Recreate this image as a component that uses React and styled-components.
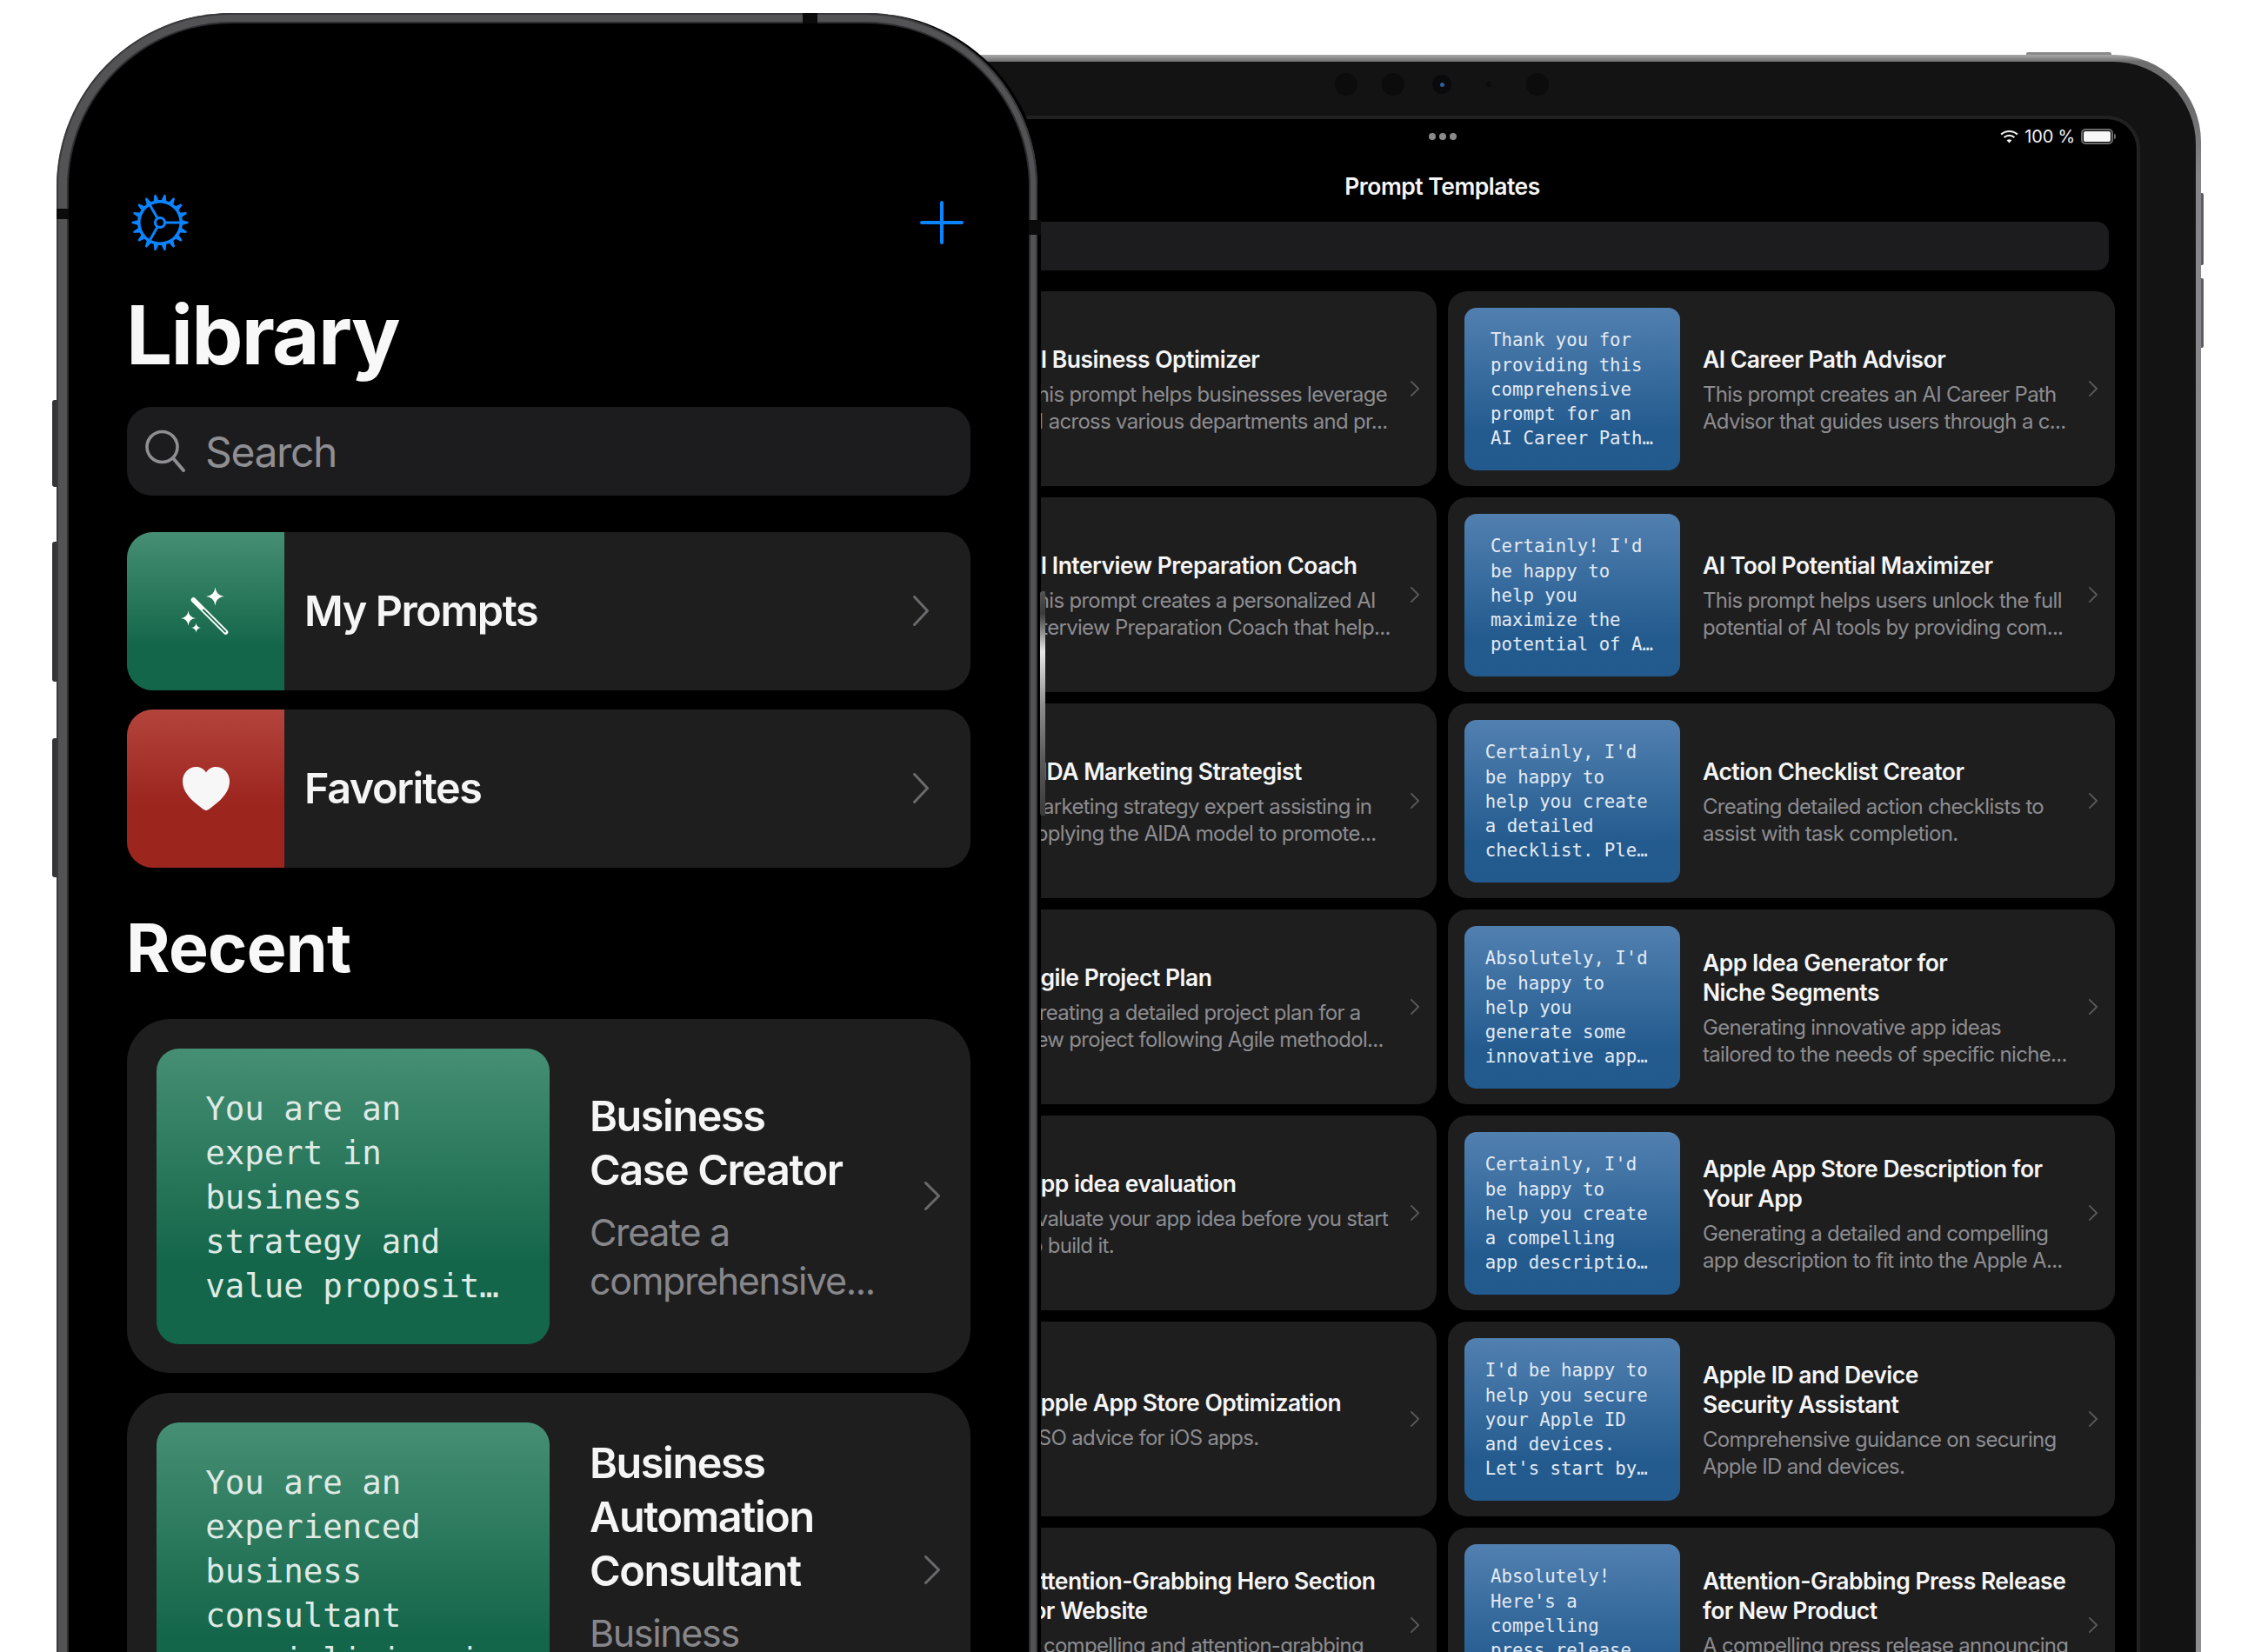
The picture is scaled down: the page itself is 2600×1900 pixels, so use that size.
import React from "react";
import styled, { createGlobalStyle } from "styled-components";

const Global = createGlobalStyle`
  html, body { margin: 0; padding: 0; background: #fff; }
  body { font-family: "Inter", "Liberation Sans", sans-serif; -webkit-font-smoothing: antialiased; }
`;

const Stage = styled.div`
  position: relative;
  width: 2600px;
  height: 1900px;
  overflow: hidden;
  background: #fff;
`;

/* ---------- iPad ---------- */
const IPad = styled.div`
  position: absolute;
  left: 786px;
  top: 63px;
  width: 1745px;
  height: 2100px;
  box-sizing: border-box;
  padding: 8px 6px 0 5px;
  border-radius: 100px;
  background: linear-gradient(180deg, #a8a8a8 0, #6e6e6e 8px, #6c6c6e 60px, #868688 140px, #909092 100%);
`;
const TopButton = styled.div`
  position: absolute;
  left: 1544px;
  top: -3px;
  width: 98px;
  height: 3px;
  border-radius: 2px 2px 0 0;
  background: #8a8a8c;
`;
const SideButton = styled.div`
  position: absolute;
  right: -3px;
  top: ${(p) => p.$top}px;
  width: 3px;
  height: ${(p) => p.$height}px;
  border-radius: 0 2px 2px 0;
  background: #5c5c5e;
`;
const Bezel = styled.div`
  height: 100%;
  box-sizing: border-box;
  padding: 62px 64px 0 65px;
  border-radius: 95px 95px 0 0;
  background: #131313;
  position: relative;
`;
const Lens = styled.div`
  position: absolute;
  top: ${(p) => 26 - p.$r}px;
  left: ${(p) => p.$x - 791 - p.$r}px;
  width: ${(p) => p.$r * 2}px;
  height: ${(p) => p.$r * 2}px;
  border-radius: 50%;
  background: ${(p) => p.$c || "#0c0c0c"};
  display: flex;
  align-items: center;
  justify-content: center;
`;
const LensDot = styled.div`
  width: 5px;
  height: 5px;
  border-radius: 50%;
  background: #2f5f9c;
`;
const Screen = styled.div`
  height: 100%;
  box-sizing: border-box;
  border: 4px solid #212121;
  border-bottom: 0;
  border-radius: 38px 38px 0 0;
  background: #000;
  display: flex;
  flex-direction: column;
`;
const StatusBar = styled.div`
  height: 40px;
  display: grid;
  grid-template-columns: 1fr auto 1fr;
  align-items: center;
  padding: 0 24px;
`;
const Dots = styled.div`
  display: flex;
  gap: 4px;
`;
const Dot = styled.span`
  width: 8px;
  height: 8px;
  border-radius: 50%;
  background: #8a8a8a;
`;
const StatusRight = styled.div`
  justify-self: end;
  display: flex;
  align-items: center;
  gap: 7px;
  color: #f2f2f2;
  font-size: 20px;
  line-height: 24px;
  letter-spacing: -0.2px;
`;
const Battery = styled.div`
  position: relative;
  width: 37px;
  height: 18px;
  box-sizing: border-box;
  border: 2px solid #6b6b6b;
  border-radius: 5px;
  padding: 1px;
  margin-right: 3px;
  &::before {
    content: "";
    display: block;
    height: 100%;
    background: #f7f7f7;
    border-radius: 2px;
  }
  &::after {
    content: "";
    position: absolute;
    right: -5px;
    top: 4px;
    width: 2px;
    height: 6px;
    border-radius: 0 2px 2px 0;
    background: #6b6b6b;
  }
`;
const NavTitle = styled.div`
  height: 76px;
  line-height: 74px;
  text-align: center;
  color: #f5f5f5;
  font-size: 26.5px;
  font-weight: 600;
  letter-spacing: -0.5px;
`;
const PadSearch = styled.div`
  height: 56px;
  margin: 2px 32px 0;
  border-radius: 14px;
  background: #1c1c1e;
`;
const PadGrid = styled.div`
  margin-top: 24px;
  padding: 0 25px;
  display: grid;
  grid-template-columns: 767px 767px;
  grid-auto-rows: 224px;
  gap: 13px;
`;
const PadCard = styled.div`
  display: flex;
  align-items: center;
  box-sizing: border-box;
  padding: 19px 20px 19px 19px;
  border-radius: 22px;
  background: #1e1e1f;
`;
const PadThumb = styled.div`
  flex: none;
  width: 248px;
  height: 187px;
  padding-top: 2px;
  box-sizing: border-box;
  border-radius: 14px;
  background: linear-gradient(180deg, #5180b0 0%, #245b8f 75%, #235a8e 100%);
  display: flex;
  align-items: center;
  justify-content: center;
`;
const PadThumbText = styled.div`
  font-family: "DejaVu Sans Mono", "Liberation Mono", monospace;
  font-size: 20.7px;
  line-height: 28.2px;
  color: #e2eaf3;
  white-space: pre;
  margin-left: -1px;
`;
const PadText = styled.div`
  flex: 1;
  min-width: 0;
  margin-left: 26px;
  padding-top: 1px;
`;
const PadTitle = styled.div`
  font-size: 26.5px;
  line-height: 34px;
  font-weight: 600;
  letter-spacing: -0.5px;
  color: #f5f5f5;
  white-space: pre-line;
`;
const PadDesc = styled.div`
  margin-top: 8px;
  font-size: 24px;
  line-height: 31px;
  letter-spacing: -0.7px;
  color: #8c8c8f;
  white-space: pre-line;
`;

/* ---------- iPhone ---------- */
const Phone = styled.div`
  position: absolute;
  left: 65px;
  top: 15px;
  width: 1128px;
  height: 2200px;
  box-sizing: border-box;
  padding: 12px 10px 0 14px;
  border-radius: 200px;
  background: #535355;
  box-shadow: 4px 0 0 #000, inset 0 0 0 2px #3a3a3c;
`;
const PhoneKey = styled.div`
  position: absolute;
  left: -5px;
  top: ${(p) => p.$top}px;
  width: 5px;
  height: ${(p) => p.$height}px;
  border-radius: 3px 0 0 3px;
  background: #353537;
`;
const Glint = styled.div`
  position: absolute;
  left: 1131px;
  top: 665px;
  width: 6px;
  height: 258px;
  border-radius: 3px 0 0 3px;
  background: linear-gradient(180deg, #555 0%, #3a3a3a 10%, #e8e8e8 27%, #8f8f8f 50%, #5a5a5a 75%, #3a3a3a 100%);
`;
const Notch = styled.div`
  position: absolute;
  background: #0b0b0b;
  ${(p) => p.$css}
`;
const PhoneScreen = styled.div`
  height: 100%;
  box-sizing: border-box;
  padding: 197px 67px 0;
  border-radius: 188px;
  background: #000;
  box-shadow: 0 0 0 2px #2e2e30;
`;
const HeaderRow = styled.div`
  height: 64px;
  display: flex;
  align-items: center;
  justify-content: space-between;
  padding: 0 8px 0 5px;
`;
const LargeTitle = styled.h1`
  margin: 47px 0 0 -1px;
  font-size: 94px;
  line-height: 100px;
  font-weight: 700;
  letter-spacing: -1.7px;
  color: #f8f8f8;
`;
const SearchField = styled.div`
  margin-top: 33px;
  height: 102px;
  border-radius: 28px;
  background: #1c1c1e;
  display: flex;
  align-items: center;
  gap: 22px;
  padding-left: 20px;
  color: #8e8e93;
  font-size: 48px;
  letter-spacing: -1.4px;
`;
const NavRow = styled.div`
  margin-top: ${(p) => p.$mt}px;
  height: 181.5px;
  border-radius: 30px;
  overflow: hidden;
  background: #1e1e1f;
  display: flex;
  align-items: center;
  padding-right: 48px;
`;
const NavIcon = styled.div`
  flex: none;
  width: 181px;
  height: 100%;
  display: flex;
  align-items: center;
  justify-content: center;
  background: ${(p) => p.$bg};
`;
const NavLabel = styled.div`
  flex: 1;
  margin-left: 23px;
  font-size: 48.5px;
  font-weight: 600;
  letter-spacing: -1.4px;
  color: #f5f5f5;
`;
const SectionTitle = styled.h2`
  margin: 50px 0 0 -1px;
  font-size: 77px;
  line-height: 84px;
  font-weight: 700;
  letter-spacing: -0.7px;
  color: #f8f8f8;
`;
const RecentList = styled.div`
  margin-top: 40px;
  display: flex;
  flex-direction: column;
  gap: 23px;
`;
const RecentCard = styled.div`
  height: 407px;
  box-sizing: border-box;
  padding: 34px 35px 33px 34px;
  border-radius: 50px;
  background: #1e1e1f;
  display: flex;
  align-items: center;
`;
const RecentThumb = styled.div`
  flex: none;
  width: 452px;
  height: 340px;
  padding-top: 3px;
  box-sizing: border-box;
  border-radius: 26px;
  background: linear-gradient(180deg, #468f74 0%, #14664a 72%, #14664a 100%);
  display: flex;
  align-items: center;
  justify-content: center;
`;
const RecentThumbText = styled.div`
  font-family: "DejaVu Sans Mono", "Liberation Mono", monospace;
  font-size: 37.4px;
  line-height: 51px;
  color: #dfeae5;
  white-space: pre;
  margin-left: -2px;
`;
const RecentText = styled.div`
  flex: 1;
  min-width: 0;
  margin-left: 46px;
  padding-top: 3px;
`;
const RecentTitle = styled.div`
  font-size: 48.5px;
  line-height: 62px;
  font-weight: 600;
  letter-spacing: -1.4px;
  color: #f5f5f5;
  white-space: pre-line;
`;
const RecentDesc = styled.div`
  margin-top: 12px;
  font-size: 43px;
  line-height: 56px;
  letter-spacing: -1.35px;
  color: #87878b;
  white-space: pre-line;
`;

/* ---------- Icons ---------- */
const Chevron = ({ w, h, sw, color }) => (
  <svg width={w} height={h} viewBox={`0 0 ${w} ${h}`} fill="none" style={{ flex: "none" }}>
    <path
      d={`M${sw / 2} ${sw / 2}L${w - sw / 2} ${h / 2}L${sw / 2} ${h - sw / 2}`}
      stroke={color}
      strokeWidth={sw}
      strokeLinecap="round"
      strokeLinejoin="round"
    />
  </svg>
);

const gearTeeth = () => {
  const n = 18;
  const pts = [];
  for (let i = 0; i < n; i++) {
    const a = (i / n) * Math.PI * 2;
    const d = (Math.PI * 2) / n;
    [[-0.3, 26], [-0.09, 32.5], [0.09, 32.5], [0.3, 26]].forEach(([o, r]) => {
      const t = a + o * d;
      pts.push(`${(33 + r * Math.cos(t)).toFixed(2)},${(33 + r * Math.sin(t)).toFixed(2)}`);
    });
  }
  return pts.join(" ");
};

const GearIcon = () => (
  <svg width="66" height="66" viewBox="0 0 66 66" fill="none">
    <polygon points={gearTeeth()} fill="#0a84ff" />
    <circle cx="33" cy="33" r="22.5" fill="#000" />
    <circle cx="33" cy="33" r="5.5" stroke="#0a84ff" strokeWidth="3.2" />
    <path d="M38.5 33H56M30.2 37.8L21.5 53M30.2 28.2L21.5 13" stroke="#0a84ff" strokeWidth="3" />
  </svg>
);

const PlusIcon = () => (
  <svg width="50" height="50" viewBox="0 0 50 50" fill="none">
    <path d="M25 2V48M2 25H48" stroke="#0a84ff" strokeWidth="4" strokeLinecap="round" />
  </svg>
);

const SearchIcon = () => (
  <svg width="48" height="50" viewBox="0 0 48 50" fill="none" style={{ flex: "none" }}>
    <circle cx="20.5" cy="20" r="17.5" stroke="#8e8e93" strokeWidth="3.6" />
    <path d="M33 33L45 47" stroke="#8e8e93" strokeWidth="4" strokeLinecap="round" />
  </svg>
);

const star = (cx, cy, r) => {
  const k = r * 0.2;
  return `M${cx} ${cy - r}Q${cx + k * 0.5} ${cy - k * 0.5} ${cx + r} ${cy}Q${cx + k * 0.5} ${cy + k * 0.5} ${cx} ${cy + r}Q${cx - k * 0.5} ${cy + k * 0.5} ${cx - r} ${cy}Q${cx - k * 0.5} ${cy - k * 0.5} ${cx} ${cy - r}Z`;
};

const WandIcon = () => (
  <svg width="60" height="60" viewBox="0 0 60 60" fill="none">
    <path d={star(40.5, 13, 10.5)} fill="#fff" />
    <path d={star(9.5, 38, 8.5)} fill="#fff" />
    <path d={star(18.5, 49, 5.5)} fill="#fff" />
    <path d="M15.5 17L52.5 54" stroke="#fff" strokeWidth="5.6" strokeLinecap="round" />
    <path d="M27 28.5L52 53.5" stroke="#1b6f52" strokeWidth="1.9" strokeLinecap="round" />
  </svg>
);

const HeartIcon = () => (
  <svg width="56" height="52" viewBox="0 0 56 52" fill="none">
    <path
      d="M28 51C26.8 51 25.6 50.4 24 49.2C9 38.4 1 29.2 1 17.6C1 8.2 8 1 16.6 1C21.6 1 25.6 3.4 28 7.6C30.4 3.4 34.4 1 39.4 1C48 1 55 8.2 55 17.6C55 29.2 47 38.4 32 49.2C30.4 50.4 29.2 51 28 51Z"
      fill="#f7f7f7"
    />
  </svg>
);

const WifiIcon = () => (
  <svg width="21" height="16" viewBox="0 0 21 16" fill="none">
    <path d="M1.2 5.6C6.4 0.8 14.6 0.8 19.8 5.6" stroke="#f5f5f5" strokeWidth="2.2" />
    <path d="M4.6 9C7.9 6 13.1 6 16.4 9" stroke="#f5f5f5" strokeWidth="2.2" />
    <path d="M10.5 15.4L7.6 12.3C9.3 10.9 11.7 10.9 13.4 12.3Z" fill="#f5f5f5" />
  </svg>
);

/* ---------- Data ---------- */
const leftCol = [
  ["AI Business Optimizer", "This prompt helps businesses leverage\nAI across various departments and pr..."],
  ["AI Interview Preparation Coach", "This prompt creates a personalized AI\nInterview Preparation Coach that help..."],
  ["AIDA Marketing Strategist", "Marketing strategy expert assisting in\napplying the AIDA model to promote..."],
  ["Agile Project Plan", "Creating a detailed project plan for a\nnew project following Agile methodol..."],
  ["App idea evaluation", "Evaluate your app idea before you start\nto build it."],
  ["Apple App Store Optimization", "ASO advice for iOS apps."],
  ["Attention-Grabbing Hero Section\nfor Website", "A compelling and attention-grabbing\nhero section for your website."],
];
const leftThumb = "Certainly, I'd\nbe happy to\nhelp you with\nthis request.\nLet's start…";
const rightCol = [
  ["AI Career Path Advisor", "This prompt creates an AI Career Path\nAdvisor that guides users through a c...", "Thank you for\nproviding this\ncomprehensive\nprompt for an\nAI Career Path…"],
  ["AI Tool Potential Maximizer", "This prompt helps users unlock the full\npotential of AI tools by providing com...", "Certainly! I'd\nbe happy to\nhelp you\nmaximize the\npotential of A…"],
  ["Action Checklist Creator", "Creating detailed action checklists to\nassist with task completion.", "Certainly, I'd\nbe happy to\nhelp you create\na detailed\nchecklist. Ple… "],
  ["App Idea Generator for\nNiche Segments", "Generating innovative app ideas\ntailored to the needs of specific niche...", "Absolutely, I'd\nbe happy to\nhelp you\ngenerate some\ninnovative app… "],
  ["Apple App Store Description for\nYour App", "Generating a detailed and compelling\napp description to fit into the Apple A...", "Certainly, I'd\nbe happy to\nhelp you create\na compelling\napp descriptio… "],
  ["Apple ID and Device\nSecurity Assistant", "Comprehensive guidance on securing\nApple ID and devices.", "I'd be happy to\nhelp you secure\nyour Apple ID\nand devices.\nLet's start by… "],
  ["Attention-Grabbing Press Release\nfor New Product", "A compelling press release announcing\na new product launch.", "Absolutely!\nHere's a\ncompelling\npress release\nannouncing the…"],
];

const recent = [
  ["Business\nCase Creator", "Create a\ncomprehensive...", "You are an\nexpert in\nbusiness\nstrategy and\nvalue proposit…"],
  ["Business\nAutomation\nConsultant", "Business\nprocess...", "You are an\nexperienced\nbusiness\nconsultant\nspecializing in"],
];

const PromptCard = ({ title, desc, thumb }) => (
  <PadCard>
    <PadThumb>
      <PadThumbText>{thumb}</PadThumbText>
    </PadThumb>
    <PadText>
      <PadTitle>{title}</PadTitle>
      <PadDesc>{desc}</PadDesc>
    </PadText>
    <Chevron w={10} h={18} sw={1.8} color="#5a5a5c" />
  </PadCard>
);

export default function App() {
  const rows = [];
  leftCol.forEach((l, i) => {
    rows.push(<PromptCard key={`l${i}`} title={l[0]} desc={l[1]} thumb={leftThumb} />);
    const r = rightCol[i];
    rows.push(<PromptCard key={`r${i}`} title={r[0]} desc={r[1]} thumb={r[2]} />);
  });
  return (
    <Stage>
      <Global />
      <IPad>
        <TopButton />
        <SideButton $top={159} $height={83} />
        <SideButton $top={257} $height={80} />
        <Bezel>
          <Lens $x={1548} $r={13} />
          <Lens $x={1602} $r={13} />
          <Lens $x={1658} $r={11} $c="#0a0a0c"><LensDot /></Lens>
          <Lens $x={1712} $r={3} />
          <Lens $x={1768} $r={13} />
          <Screen>
            <StatusBar>
              <span />
              <Dots>
                <Dot />
                <Dot />
                <Dot />
              </Dots>
              <StatusRight>
                <WifiIcon />
                <span>100 %</span>
                <Battery />
              </StatusRight>
            </StatusBar>
            <NavTitle>Prompt Templates</NavTitle>
            <PadSearch />
            <PadGrid>{rows}</PadGrid>
          </Screen>
        </Bezel>
      </IPad>

      <Phone>
        <PhoneKey $top={445} $height={100} />
        <PhoneKey $top={608} $height={161} />
        <PhoneKey $top={834} $height={160} />
        <Glint />
        <Notch $css="left: 858px; top: 0; width: 17px; height: 12px;" />
        <Notch $css="left: 0; top: 225px; width: 14px; height: 12px;" />
        <Notch $css="right: -4px; top: 238px; width: 14px; height: 17px;" />
        <PhoneScreen>
          <HeaderRow>
            <GearIcon />
            <PlusIcon />
          </HeaderRow>
          <LargeTitle>Library</LargeTitle>
          <SearchField>
            <SearchIcon />
            <span>Search</span>
          </SearchField>
          <NavRow $mt={42}>
            <NavIcon $bg="linear-gradient(180deg, #468f74 0%, #14664a 72%)">
              <WandIcon />
            </NavIcon>
            <NavLabel>My Prompts</NavLabel>
            <Chevron w={18} h={35} sw={3} color="#6a6a6d" />
          </NavRow>
          <NavRow $mt={22.5}>
            <NavIcon $bg="linear-gradient(180deg, #b3443c 0%, #9c251e 60%)">
              <HeartIcon />
            </NavIcon>
            <NavLabel>Favorites</NavLabel>
            <Chevron w={18} h={35} sw={3} color="#6a6a6d" />
          </NavRow>
          <SectionTitle>Recent</SectionTitle>
          <RecentList>
            {recent.map((c) => (
              <RecentCard key={c[0]}>
                <RecentThumb>
                  <RecentThumbText>{c[2]}</RecentThumbText>
                </RecentThumb>
                <RecentText>
                  <RecentTitle>{c[0]}</RecentTitle>
                  <RecentDesc>{c[1]}</RecentDesc>
                </RecentText>
                <Chevron w={18} h={33} sw={3} color="#6a6a6d" />
              </RecentCard>
            ))}
          </RecentList>
        </PhoneScreen>
      </Phone>
    </Stage>
  );
}
